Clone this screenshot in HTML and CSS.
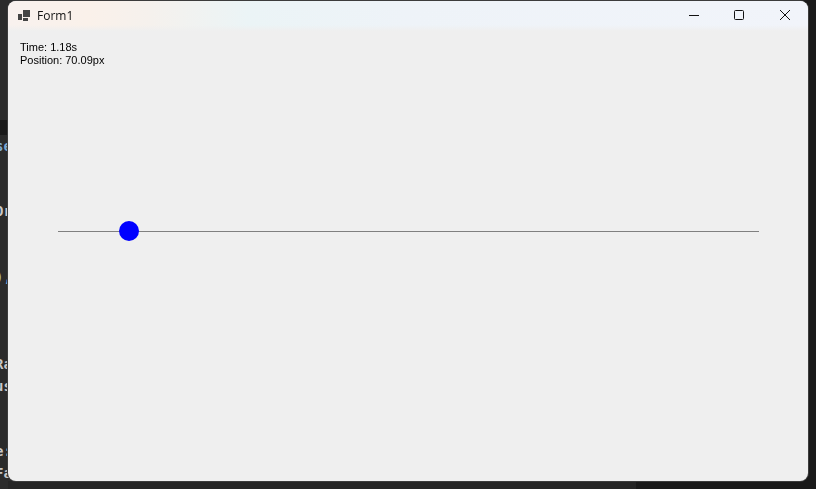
FILE: index.html
```html
<!DOCTYPE html>
<html lang="en">
  <head>
    <meta charset="UTF-8" />
    <meta name="viewport" content="width=device-width, initial-scale=1.0" />
    <title>Form1</title>
    <link rel="stylesheet" href="styles.css" />
  </head>
  <body>
    <!-- code editor behind the window -->
    <div class="editor" aria-hidden="true">
      <div class="current-line"></div>
      <div class="code">
        <span class="keyword">se</span>
        <span></span>
        <span></span>
        <span>Or</span>
        <span></span>
        <span></span>
        <span class="string">)<b class="keyword">,</b></span>
        <span></span>
        <span></span>
        <span></span>
        <span>Ra</span>
        <span>us</span>
        <span></span>
        <span></span>
        <span>e:</span>
        <span>Fa</span>
      </div>
      <div class="panel"></div>
    </div>

    <div class="window">
      <header class="title-bar">
        <svg class="app-icon" width="12" height="13" viewBox="0 0 12 13">
          <path d="M0 4h4v6H0zM5 0h7v7H5zM5 8h5v3H5z" fill="#444" />
        </svg>
        <h1>Form1</h1>
        <div class="window-buttons">
          <button type="button" aria-label="Minimize">
            <svg width="12" height="12" viewBox="0 0 12 12">
              <path d="M2 6.5h10" />
            </svg>
          </button>
          <button type="button" aria-label="Maximize">
            <svg width="12" height="12" viewBox="0 0 12 12">
              <rect x="1.5" y="1.5" width="9" height="9" rx="1" />
            </svg>
          </button>
          <button type="button" aria-label="Close">
            <svg width="12" height="12" viewBox="0 0 12 12">
              <path d="M1 1l10 10M11 1L1 11" />
            </svg>
          </button>
        </div>
      </header>
      <main class="client">
        <div class="readout">
          <p>Time: 1.18s</p>
          <p>Position: 70.09px</p>
        </div>
        <div class="track">
          <div class="ball" style="left: 70.09px"></div>
        </div>
      </main>
    </div>
  </body>
</html>
```

FILE: styles.css
```css
* {
  box-sizing: border-box;
}
body {
  display: flex;
  min-height: 100vh;
  margin: 0;
  padding: 1px 8px 8px;
  background-color: #1a1a1a;
  font-family: "Liberation Sans", Arial, sans-serif;
}

.editor {
  position: fixed;
  inset: 0 22% 0 0;
  background-color: #2b2b2b;
  overflow: hidden;
}
.current-line {
  position: absolute;
  top: 120px;
  width: 100%;
  height: 15px;
  background-color: #1a1a1a;
}
.panel {
  position: absolute;
  bottom: 0;
  left: 8px;
  right: 0;
  height: 8px;
  background-color: #252525;
}
.code {
  position: absolute;
  top: 135px;
  bottom: 5px;
  left: -5px;
  display: grid;
  grid-template-rows: repeat(16, 1fr);
  align-items: center;
  color: #c8c8c8;
  font: bold 14px/20px "DejaVu Sans Mono", monospace;
}
.keyword {
  color: #7fa9cf;
}
.string {
  color: #a5bb8b;
}

.window {
  position: relative;
  display: flex;
  flex-direction: column;
  flex: 1;
  border-radius: 8px;
  background-color: #efefef;
  box-shadow: 0 0 0 1px #3c3c3c;
  overflow: hidden;
}
.title-bar {
  display: flex;
  align-items: center;
  height: 30px;
  padding-left: 10px;
  background:
    linear-gradient(transparent 80%, #efefef),
    linear-gradient(90deg, #f8f1ee, #faf1ea 10%, #f5f1ed 18%, #ebf4f6 30%, #eef3f8 50%, #f1f4fa);
}
.title-bar h1 {
  margin: 0 0 0 7px;
  font: 12px/16px "Open Sans", sans-serif;
  color: #111;
}
.window-buttons {
  display: flex;
  height: 100%;
  margin-left: auto;
}
.window-buttons button {
  display: flex;
  align-items: center;
  justify-content: center;
  width: 46px;
  padding: 0 0 2px;
  border: 0;
  background: none;
}
.window-buttons svg {
  fill: none;
  stroke: #111;
}

.client {
  flex: 1;
  padding: 10px 12px;
}
.readout {
  height: 52px;
  color: #000;
  font-size: 11px;
  line-height: 13px;
}
.readout p {
  margin: 0;
}
.track {
  position: relative;
  height: 1px;
  margin: 138px 37px 0 38px;
  background-color: #808080;
}
.ball {
  position: absolute;
  top: -10px;
  width: 20px;
  height: 20px;
  margin-left: -9px;
  border-radius: 50%;
  background-color: #0000ff;
}
```
